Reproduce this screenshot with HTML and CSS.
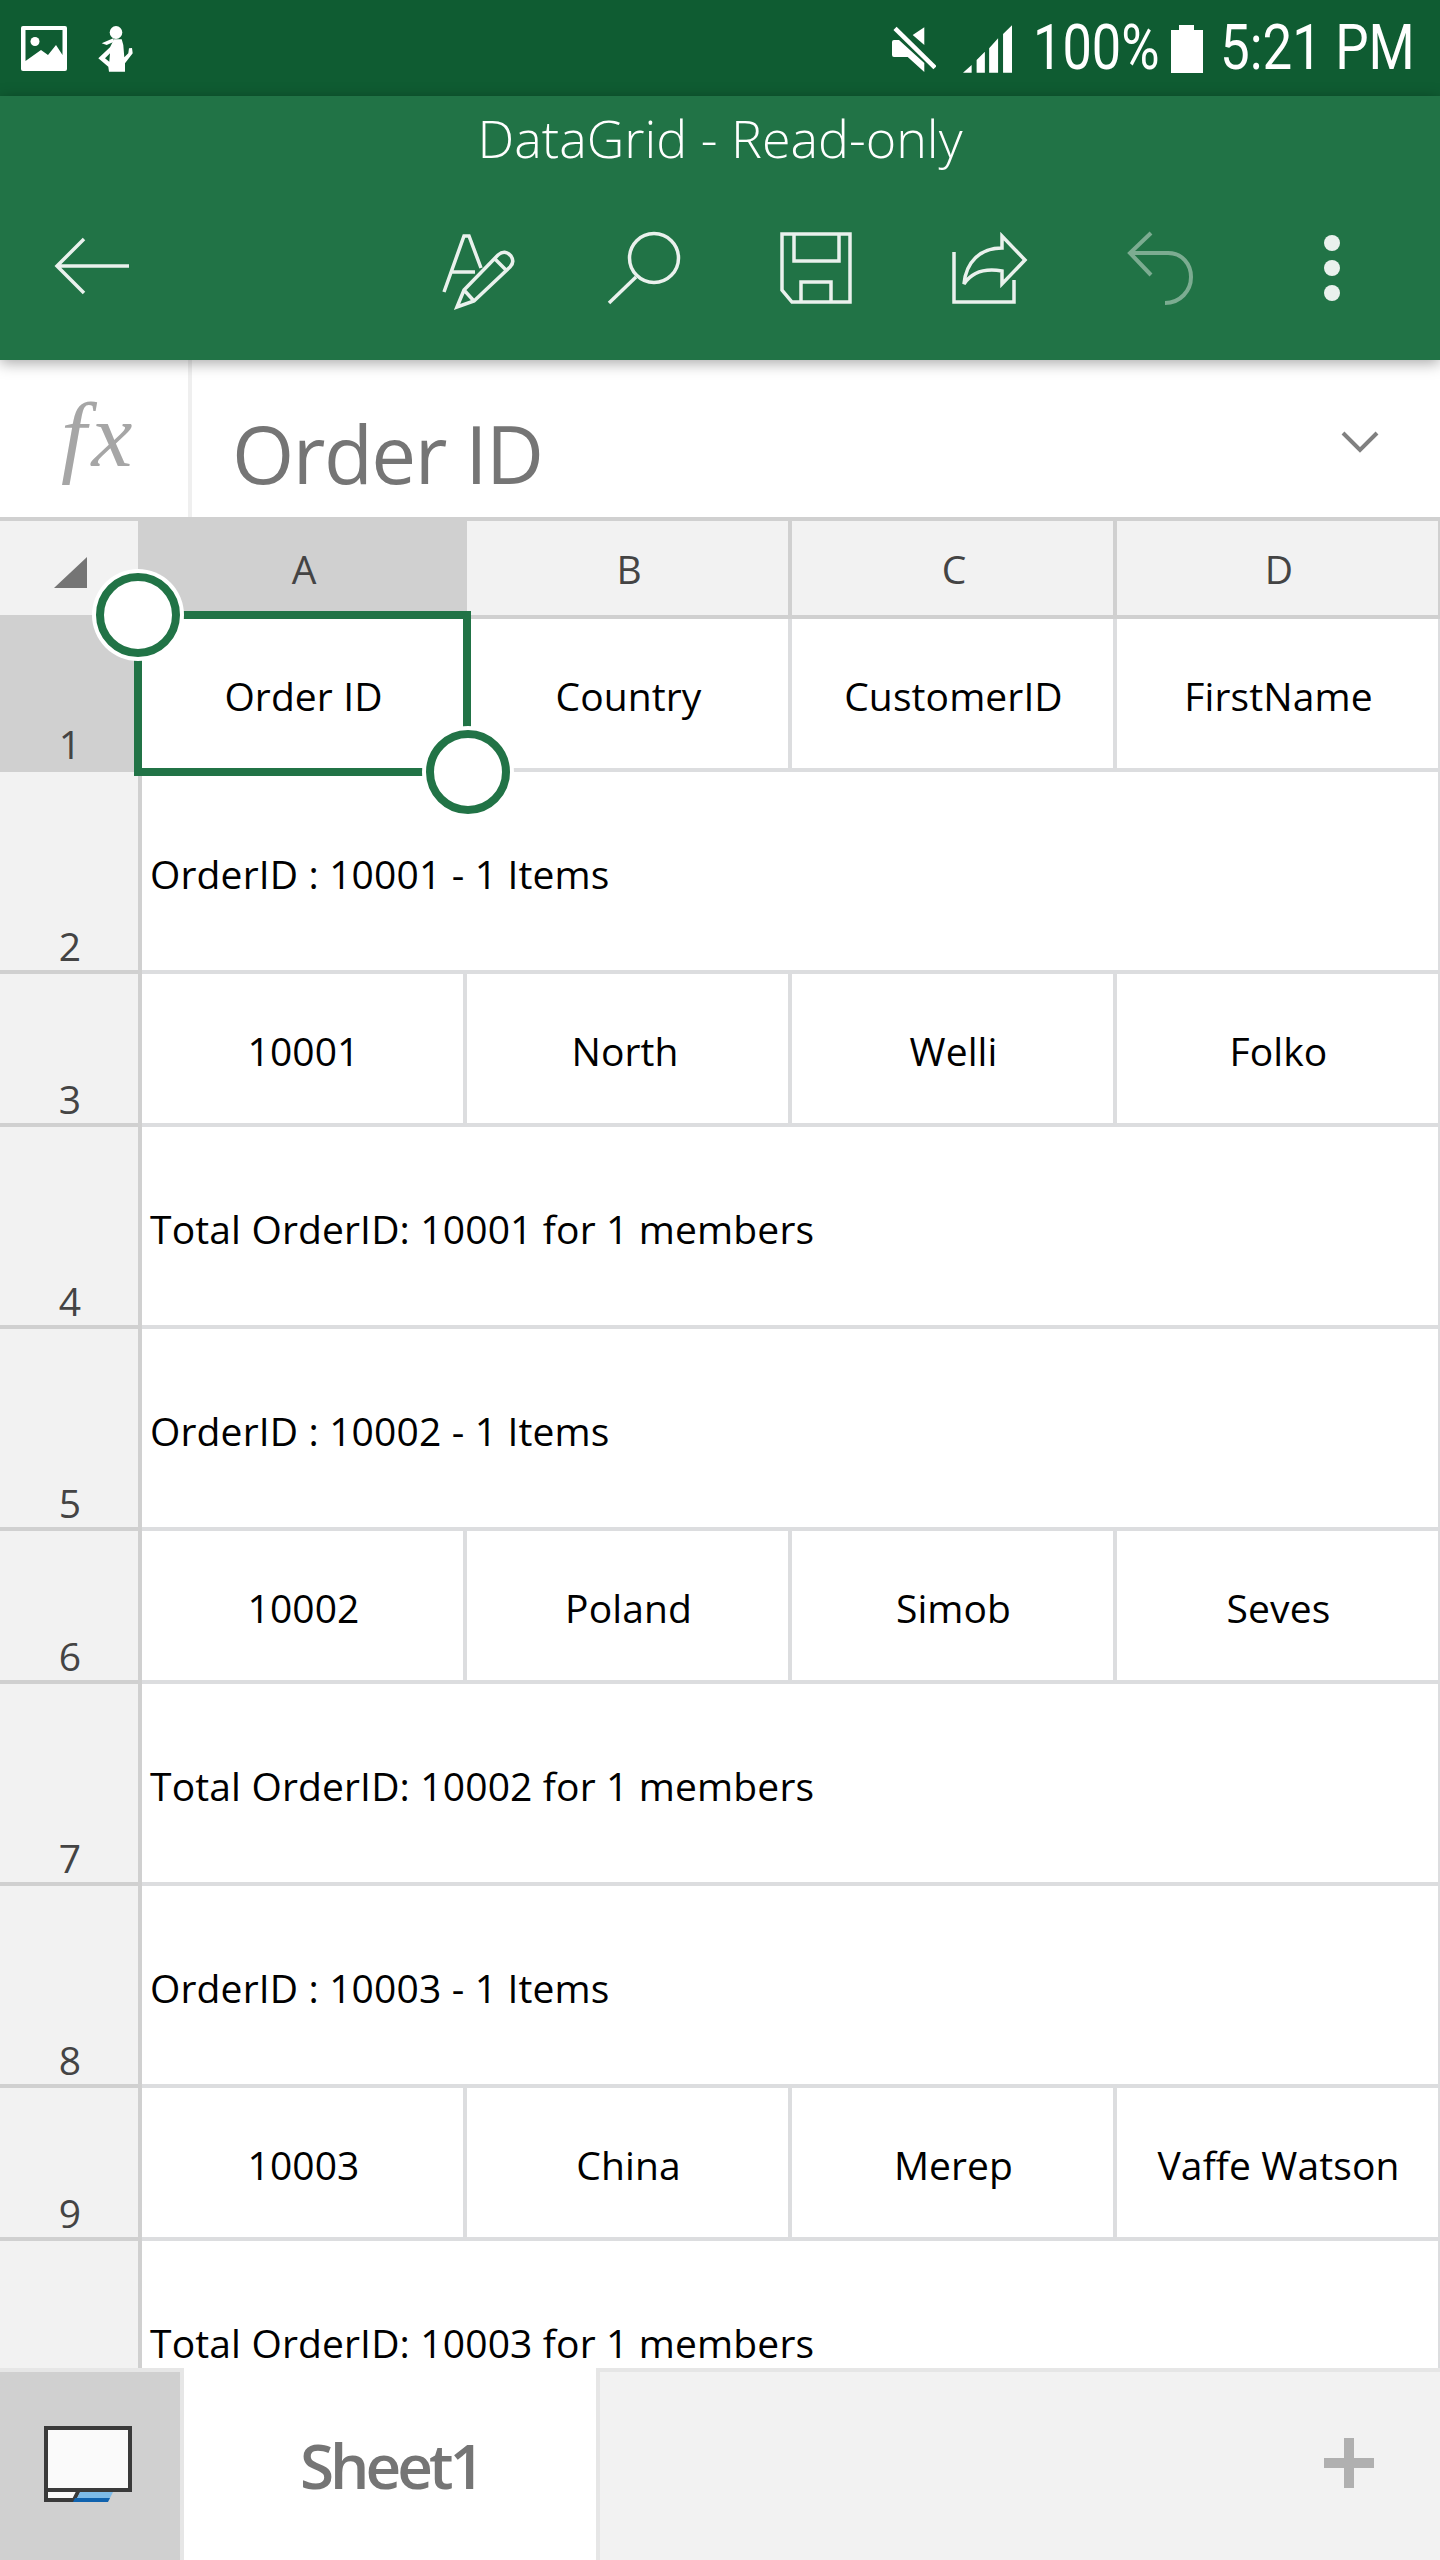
FILE: index.html
```html
<!DOCTYPE html>
<html lang="en">
<head>
<meta charset="utf-8">
<title>DataGrid - Read-only</title>
<link rel="stylesheet" href="styles.css">
</head>
<body>
<div class="app">
  <header class="status">
    <svg class="ic-image" viewBox="0 0 46 45" width="46" height="45"><rect width="46" height="45" rx="2" fill="#fff"/><path d="M4.5 4H41.500V29L35 19L27 29L20 24L4.500 35Z" fill="#0f5c32"/><circle cx="14" cy="15.500" r="4.500" fill="#fff"/></svg>
    <svg class="ic-person" viewBox="0 0 36 46" width="36" height="46"><ellipse cx="18" cy="6.500" rx="6.300" ry="6.500" fill="#fff"/><path d="M15.300 12.300L3.700 17.300L8.700 19L16 15.700Z" fill="#fff"/><path fill-rule="evenodd" d="M16 13.300L12 21.300L.3 32.300L10.300 40.700L11 45.700H27V37.300L34.700 27.300L34 22L31 22.300L30.300 27.300L26.300 31.300L25.300 19L23.700 13.300ZM12 27.300L7 32.300L11.300 35.700Z" fill="#fff"/></svg>
    <svg class="ic-mute" viewBox="0 0 44 47" width="44" height="47"><path d="M32.300 1.300V19L20.700 9ZM0 16Q0 14 2 14H7L32.300 37V46L15.700 31H2Q0 31 0 29Z" fill="#fff"/><path d="M3 2.300L43 41.700" stroke="#fff" stroke-width="4.500" fill="none"/></svg>
    <svg class="ic-signal" viewBox="0 0 49.300 48" width="49" height="48"><path d="M0 48L8.700 40V48ZM13.700 48V35L22 26.700V48ZM26.300 48V23.300L35.300 13.300V48ZM40.300 48V9L49.300 0V48Z" fill="#fff"/></svg>
    <span class="status-text pct">100%</span>
    <svg class="ic-battery" viewBox="0 0 32 48" width="32" height="48"><path d="M8 0H23V5H32V48H0V5H8Z" fill="#fff"/></svg>
    <span class="status-text clock">5:21 PM</span>
  </header>

  <section class="ribbon">
    <h1 class="doc-title">DataGrid - Read-only</h1>
    <nav class="toolbar">
      <svg class="tool tool-back" viewBox="0 0 100 100" width="100" height="100"><path d="M87 48H16M42 21L15 48L42 75"/></svg>
      <svg class="tool tool-font" viewBox="0 0 100 100" width="100" height="100"><path d="M16 74L36 18H41L53 50M24 54H47"/><path class="pencil" d="M29 89L36 72L70 37Q77 31 83 38Q87 44 82 49L46 83ZM67 41L78 52M36 72L46 83"/></svg>
      <svg class="tool tool-search" viewBox="0 0 100 100" width="100" height="100"><circle cx="59" cy="40" r="24.500"/><path d="M41 59L14 85"/></svg>
      <svg class="tool tool-save" viewBox="0 0 100 100" width="100" height="100"><path d="M14 16H82V84H24L14 72ZM26 16V43H71V16M33 84V64H63V84"/></svg>
      <svg class="tool tool-share" viewBox="0 0 100 100" width="100" height="100"><path d="M16 34V84H76V62"/><path d="M64 18V30C42 30 28 44 26 66C34 54 47 50 64 53V66L87 42Z"/></svg>
      <svg class="tool tool-undo" viewBox="0 0 100 100" width="100" height="100"><path d="M43 15L22 35L43 57M22 35H60C74 35 83 46 83 59C83 73 72 85 57 85"/></svg>
      <svg class="tool tool-more" viewBox="0 0 100 100" width="100" height="100"><circle cx="54" cy="25" r="8"/><circle cx="54" cy="50" r="8"/><circle cx="54" cy="75" r="8"/></svg>
    </nav>
  </section>

  <section class="formula">
    <div class="fx">fx</div>
    <div class="formula-value">Order ID</div>
    <svg class="chevron" viewBox="0 0 38 23" width="38" height="23"><path d="M2 2L19 19L36 2"/></svg>
  </section>

  <main class="sheet">
    <div class="grid">
      <div class="corner"><svg viewBox="0 0 33 31" width="33" height="31"><path d="M33 0V31H0Z" fill="#757575"/></svg></div>
      <div class="col-head is-selected">A</div>
      <div class="col-head">B</div>
      <div class="col-head">C</div>
      <div class="col-head col-last">D</div>

      <div class="row-head is-selected">1</div>
      <div class="cell">Order ID</div>
      <div class="cell">Country</div>
      <div class="cell">CustomerID</div>
      <div class="cell col-last">FirstName</div>

      <div class="row-head">2</div>
      <div class="merged">OrderID : 10001 - 1 Items</div>

      <div class="row-head">3</div>
      <div class="cell">10001</div>
      <div class="cell cell-off">North</div>
      <div class="cell">Welli</div>
      <div class="cell col-last">Folko</div>

      <div class="row-head">4</div>
      <div class="merged">Total OrderID: 10001 for 1 members</div>

      <div class="row-head">5</div>
      <div class="merged">OrderID : 10002 - 1 Items</div>

      <div class="row-head">6</div>
      <div class="cell">10002</div>
      <div class="cell">Poland</div>
      <div class="cell">Simob</div>
      <div class="cell col-last">Seves</div>

      <div class="row-head">7</div>
      <div class="merged">Total OrderID: 10002 for 1 members</div>

      <div class="row-head">8</div>
      <div class="merged">OrderID : 10003 - 1 Items</div>

      <div class="row-head">9</div>
      <div class="cell">10003</div>
      <div class="cell">China</div>
      <div class="cell">Merep</div>
      <div class="cell col-last">Vaffe Watson</div>

      <div class="row-head"></div>
      <div class="merged">Total OrderID: 10003 for 1 members</div>
    </div>
    <div class="selection"></div>
    <div class="handle handle-start"></div>
    <div class="handle handle-end"></div>
  </main>

  <footer class="tabs">
    <div class="view-btn">
      <svg viewBox="0 0 88 76" width="88" height="76"><path d="M2 64V74H30L35 64Z" fill="#fafafa" stroke="#3a3a3a" stroke-width="4"/><path d="M32 74L37 64H70L65 74Z" fill="#7dbbe8"/><path d="M29 76L31 72H66L64 76Z" fill="#0f62ae"/><rect x="2" y="2" width="84" height="62" fill="#fafafa" stroke="#3a3a3a" stroke-width="4"/></svg>
    </div>
    <div class="tab">Sheet1</div>
    <div class="tab-rest">
      <svg class="add" viewBox="0 0 50 50" width="50" height="50"><path d="M20 0H30V20H50V30H30V50H20V30H0V20H20Z" fill="#b0b0b0"/></svg>
    </div>
  </footer>
</div>
</body>
</html>
```

FILE: styles.css
```css
* { box-sizing: border-box; }
html, body { margin: 0; padding: 0; background: #fff; }
body { font-family: "Open Sans", "Noto Sans", "Liberation Sans", sans-serif; }

.app { width: 1440px; height: 2560px; display: flex; flex-direction: column; overflow: hidden; }

/* status bar */
.status { height: 96px; flex: none; background: #0f5c32; display: flex; align-items: flex-start; padding-left: 21px; }
.status svg { flex: none; }
.ic-image { margin-top: 26px; }
.ic-person { margin: 26px 0 0 31px; }
.ic-mute { margin: 26px 0 0 758px; }
.ic-signal { margin: 25px 0 0 27px; }
.ic-battery { margin: 25px 0 0 14px; }
.status-text { font-family: Roboto, sans-serif; font-size: 63px; line-height: 96px; height: 96px; color: #fff; white-space: nowrap; transform-origin: left top; display: block; flex: none; }
.pct { width: 124px; margin-left: 21px; transform: scaleX(.83); }
.clock { width: 189px; margin-left: 17px; transform: scaleX(.84); }

/* ribbon */
.ribbon { height: 264px; flex: none; background: #217346; position: relative; z-index: 2; box-shadow: 0 3px 14px rgba(0,0,0,.35); }
.doc-title { margin: 0; height: 122px; padding-top: 4px; font-size: 52px; line-height: 76px; font-weight: 300; color: #fff; text-align: center; }
.toolbar { display: flex; gap: 70px; padding-left: 42px; }
.tool { flex: none; fill: none; stroke: #eaf1ed; stroke-width: 3.5; }
.tool-back { margin-right: 216px; }
.tool-font .pencil { fill: #217346; }
.tool-search { margin-left: -3px; margin-right: 3px; }
.tool-undo { stroke: rgba(234,241,237,.45); stroke-width: 4; }
.tool-more { fill: #eaf1ed; stroke: none; }

/* formula bar */
.formula { height: 161px; flex: none; display: flex; background: #fff; border-bottom: 4px solid #d0d0d0; }
.fx { width: 192px; flex: none; border-right: 4px solid #efefef; font-family: "Liberation Serif", serif; font-style: italic; font-size: 92px; line-height: 150px; letter-spacing: 5px; color: #a6a6a6; padding-left: 61px; }
.formula-value { flex: 1; padding: 14px 0 0 40px; font-size: 80px; line-height: 157px; color: #757575; letter-spacing: -1.5px; }
.chevron { flex: none; margin: 71px 61px 0 0; fill: none; stroke: #808080; stroke-width: 4; }

/* sheet */
.sheet { position: relative; flex: 1; min-height: 0; overflow: hidden; background: #fff; }
.grid { display: grid; grid-template-columns: 142px 325px 325px 325px 323px; grid-template-rows: 98px 153px 202px 153px 202px 202px 153px 202px 202px 153px 202px; font-size: 39px; color: #000; }
.corner { background: #f2f2f2; border-right: 4px solid #d0d0d0; border-bottom: 4px solid #d0d0d0; padding: 36px 0 0 54px; }
.corner svg { display: block; }
.col-head { background: #f2f2f2; border-right: 4px solid #d0d0d0; border-bottom: 4px solid #d0d0d0; color: #444; display: flex; align-items: center; justify-content: center; padding-left: 3px; }
.col-head.is-selected, .row-head.is-selected { background: #d0d0d0; }
.row-head { background: #f2f2f2; border-right: 4px solid #d0d0d0; border-bottom: 4px solid #d0d0d0; color: #444; display: flex; align-items: flex-end; justify-content: center; padding-left: 2px; line-height: 48px; }
.cell { border-right: 4px solid #dcdddf; border-bottom: 4px solid #dcdddf; display: flex; align-items: center; justify-content: center; white-space: nowrap; padding: 4px 0 0 2px; letter-spacing: .1px; }
.cell-off { padding-left: 0; padding-right: 5px; }
.merged { grid-column: span 4; border-right: 2px solid #dcdddf; border-bottom: 4px solid #dcdddf; display: flex; align-items: center; padding: 4px 0 0 8px; white-space: nowrap; letter-spacing: .15px; }
.col-last { border-right-width: 2px; }

.selection { position: absolute; left: 134px; top: 90px; width: 337px; height: 165px; border: 8px solid #217346; }
.handle { position: absolute; width: 84px; height: 84px; border-radius: 50%; background: #fff; border: 8px solid #217346; box-shadow: 0 0 0 4px #fff; }
.handle-start { left: 96px; top: 52px; }
.handle-end { left: 426px; top: 209px; }

/* tabs */
.tabs { height: 192px; flex: none; display: flex; background: #f2f2f2; }
.view-btn { width: 184px; flex: none; background: #d0d0d0; border-top: 4px solid #e6e6e6; border-right: 4px solid #e6e6e6; padding: 54px 0 0 44px; }
.view-btn svg { display: block; }
.tab { width: 412px; flex: none; background: #fff; color: #757575; font-size: 62px; font-weight: 600; padding: 8px 0 0 116px; line-height: 178px; letter-spacing: -4px; }
.tab-rest { flex: 1; border-top: 4px solid #e6e6e6; border-left: 4px solid #e6e6e6; display: flex; justify-content: flex-end; padding: 66px 66px 0 0; }
.add { flex: none; }
```
